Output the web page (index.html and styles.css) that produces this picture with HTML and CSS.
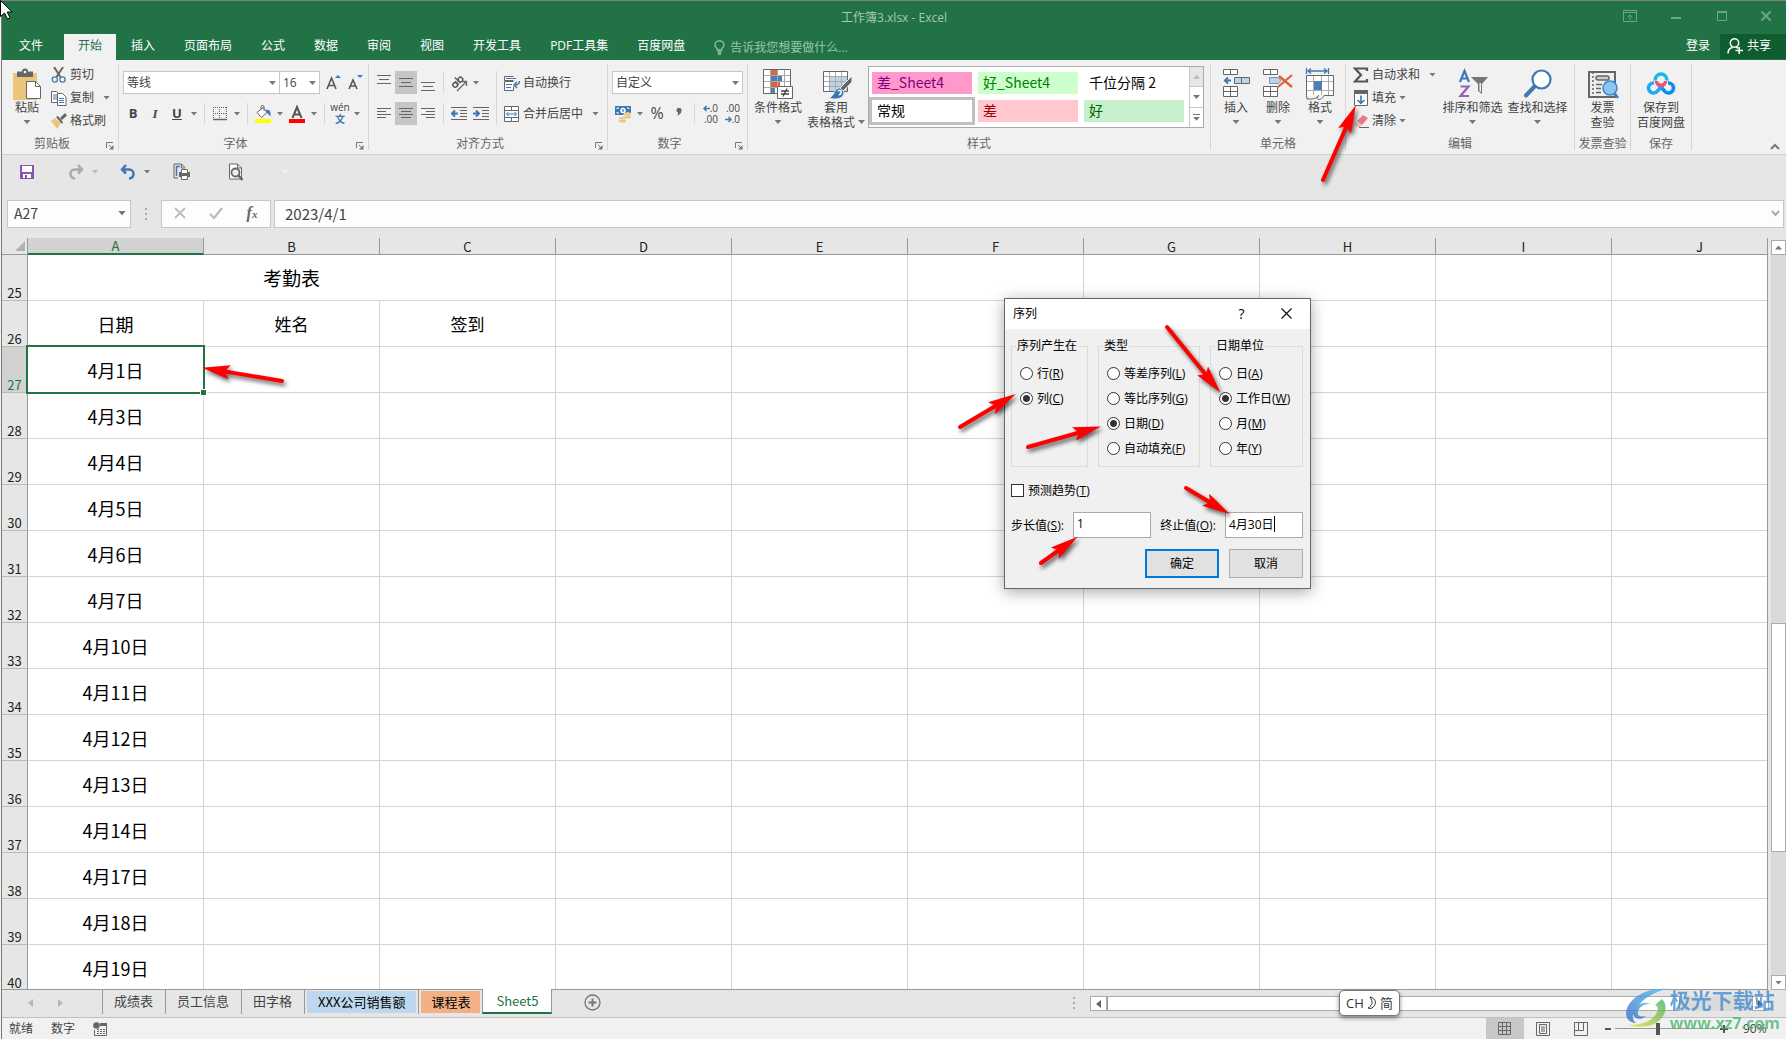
FILE: index.html
```html
<!DOCTYPE html>
<html lang="zh-CN">
<head>
<meta charset="utf-8">
<title>工作簿3.xlsx - Excel</title>
<link rel="stylesheet" href="styles.css">
</head>
<body>
<div class="window">
  <header class="titlebar">
    <div class="titlebar-side"></div>
    <h1 class="doc-title">工作簿3.xlsx - Excel</h1>
    <div class="titlebar-side window-controls">
      <button class="win-btn" aria-label="功能区显示选项"><svg width="14" height="12" viewBox="0 0 14 12" fill="none" stroke="currentColor"><path d="M.5.5h13v11H.5zM.5 2.5h13M7 10V5M4.500 7.500 7 5l2.500 2.500"/></svg></button>
      <button class="win-btn" aria-label="最小化"><svg width="14" height="12" viewBox="0 0 14 12"><path d="M2 7h10v2H2z" fill="currentColor"/></svg></button>
      <button class="win-btn" aria-label="最大化"><svg width="14" height="12" viewBox="0 0 14 12"><path d="M2.500 1v9.500h9V1M2 2h10" fill="none" stroke="currentColor"/><path d="M2 1h10v2H2z" fill="currentColor"/></svg></button>
      <button class="win-btn" aria-label="关闭"><svg width="14" height="12" viewBox="0 0 14 12"><path d="M2.500 1.500l9 9M11.500 1.500l-9 9" stroke="currentColor" stroke-width="2"/></svg></button>
    </div>
  </header>

  <nav class="tabs">
    <button class="tab tab-file">文件</button>
    <button class="tab tab-active">开始</button>
    <button class="tab">插入</button>
    <button class="tab">页面布局</button>
    <button class="tab">公式</button>
    <button class="tab">数据</button>
    <button class="tab">审阅</button>
    <button class="tab">视图</button>
    <button class="tab">开发工具</button>
    <button class="tab">PDF工具集</button>
    <button class="tab">百度网盘</button>
    <button class="tell-me"><svg width="11" height="15" viewBox="0 0 11 15" fill="none" stroke="currentColor" stroke-width="1.300"><path d="M3.500 10C3.500 8 1 7.500 1 4.800a4.500 4 0 0 1 9 0C10 7.500 7.500 8 7.500 10zM3.500 12h4M4 14h3"/></svg>告诉我您想要做什么...</button>
    <button class="sign-in">登录</button>
    <button class="share"><svg width="16" height="16" viewBox="0 0 16 16" fill="none" stroke="currentColor" stroke-width="1.500"><circle cx="7.500" cy="5" r="4.200"/><path d="M1 15.500c0-3.500 2-5.500 4.500-6M9 8.500l2 2M8.500 12.500H16M12.200 9v7"/></svg>共享</button>
  </nav>

  <div class="ribbon">
    <section class="group g-clipboard">
      <div class="group-body">
        <button class="big big-paste">
          <svg width="30" height="30" viewBox="0 0 30 30"><path d="M1 4h24v27H1z" fill="#ecc57c"/><path d="M5 2.500h5a3 3 0 0 1 6 0h5V8H5z" fill="#666"/><circle cx="13" cy="3" r="1.300" fill="#fff"/><path d="M14.500 12.500h9l5 5v12h-14z" fill="#fff" stroke="#666"/><path d="M23.500 12.500v5h5" fill="none" stroke="#666"/></svg>
          <span>粘贴</span><i class="caret"></i>
        </button>
        <div class="stack">
          <button class="small"><svg width="16" height="16" viewBox="0 0 16 16" fill="none"><path d="M3 0l6.500 10M12 0L5.500 10" stroke="#666" stroke-width="2"/><circle cx="3.800" cy="12.500" r="2.600" stroke="#3e78b3" stroke-width="1.300"/><circle cx="11.500" cy="12.500" r="2.600" stroke="#3e78b3" stroke-width="1.300"/></svg>剪切</button>
          <button class="small"><svg width="16" height="16" viewBox="0 0 16 16"><path d="M.5 1.500h5l2 2v9h-7z" fill="#fff" stroke="#666"/><path d="M2 5h4M2 7h4M2 9h4" stroke="#3e78b3"/><path d="M6.500 3.500h5l3.500 3.500v8.500H6.500z" fill="#fff" stroke="#666"/><path d="M8 8.500h5M8 10.500h5M8 12.500h5" stroke="#3e78b3"/></svg>复制<i class="caret caret-far"></i></button>
          <button class="small"><svg width="16" height="16" viewBox="0 0 16 16"><path d="M0 8l4-3 6 5-4 6z" fill="#ecc57c"/><path d="M5 4l2-1 5 6-1 2z" fill="#666"/><path d="M9 5l5-5 2 2.500L11 7z" fill="#666"/></svg>格式刷</button>
        </div>
      </div>
      <h2 class="group-label label-launch">剪贴板</h2>
      <button class="launcher" aria-label="剪贴板选项"><svg width="8" height="8" viewBox="0 0 8 8"><path d="M.5 6V.5H7M3 3l3 3" fill="none" stroke="#777"/><path d="M7.500 3v4.500H3z" fill="#777"/></svg></button>
    </section>

    <section class="group g-font">
      <div class="group-body rows">
        <div class="row">
          <label class="combo combo-font"><select aria-label="字体"><option>等线</option></select><i class="caret"></i></label>
          <label class="combo combo-size"><select aria-label="字号"><option>16</option></select><i class="caret"></i></label>
          <button class="tool tool-grow" aria-label="增大字号"><svg width="16" height="16" viewBox="0 0 16 16"><path d="M1 14L5.500 3 10 14M3 10.500h5.500" fill="none" stroke="#555" stroke-width="1.600"/><path d="M9 3l3-3 3 3z" fill="#3e78b3"/></svg></button>
          <button class="tool" aria-label="减小字号"><svg width="16" height="16" viewBox="0 0 16 16"><path d="M1 14L5 5l4 9M2.500 11h5" fill="none" stroke="#555" stroke-width="1.600"/><path d="M9 0l3 3 3-3z" fill="#3e78b3"/></svg></button>
        </div>
        <div class="row row-font">
          <button class="tool"><b>B</b></button><button class="tool serif"><b><em>I</em></b></button><button class="tool"><b><u>U</u></b></button><button class="drop" aria-label="下划线选项"><i class="caret"></i></button>
          <span class="sep"></span>
          <button class="tool" aria-label="边框"><svg width="14" height="16" viewBox="0 0 14 16" fill="none" stroke="#666"><path d="M0 1.500h14M0 7.500h14M.5 1v12M6.500 1v12M13.500 1v12" stroke-dasharray="1 1"/><path d="M0 13.500h14" stroke-width="1.500"/></svg></button><button class="drop" aria-label="边框选项"><i class="caret"></i></button>
          <span class="sep"></span>
          <button class="tool" aria-label="填充颜色"><svg width="17" height="18" viewBox="0 0 17 18"><path d="M2 7.500l6-5 4 5-5.500 5z" fill="#fff" stroke="#666"/><path d="M6 5V2a1.500 1.500 0 0 1 3 0v4" fill="none" stroke="#666"/><path d="M11 5c4-1 5 2 4.500 6.500C13.500 10 13 8 11 7z" fill="#3e78b3"/><path d="M0 14h16v4H0z" fill="#ff0"/></svg></button><button class="drop" aria-label="填充颜色选项"><i class="caret"></i></button>
          <button class="tool" aria-label="字体颜色"><svg width="16" height="18" viewBox="0 0 16 18"><path d="M3.500 13L8 2l4.500 11M5 9.500h6" fill="none" stroke="#555" stroke-width="2"/><path d="M0 14h16v4H0z" fill="red"/></svg></button><button class="drop" aria-label="字体颜色选项"><i class="caret"></i></button>
          <span class="sep"></span>
          <button class="tool phonetic"><span>wén</span><span class="phonetic-char">文</span></button><button class="drop" aria-label="拼音选项"><i class="caret"></i></button>
        </div>
      </div>
      <h2 class="group-label label-launch">字体</h2>
      <button class="launcher" aria-label="字体设置"><svg width="8" height="8" viewBox="0 0 8 8"><path d="M.5 6V.5H7M3 3l3 3" fill="none" stroke="#777"/><path d="M7.500 3v4.500H3z" fill="#777"/></svg></button>
    </section>

    <section class="group g-align">
      <div class="group-body">
        <div class="rows">
          <div class="row">
            <button class="tool" aria-label="顶端对齐"><svg width="14" height="16" viewBox="0 0 14 16" stroke="#666"><path d="M0 .5h14M2 4.500h10M0 8.500h14"/></svg></button><button class="tool tool-on" aria-label="垂直居中"><svg width="14" height="16" viewBox="0 0 14 16" stroke="#666"><path d="M0 3.500h14M2 7.500h10M0 11.500h14"/></svg></button><button class="tool" aria-label="底端对齐"><svg width="14" height="16" viewBox="0 0 14 16" stroke="#666"><path d="M0 7.500h14M2 11.500h10M0 15.500h14"/></svg></button>
            <span class="sep"></span>
            <button class="tool" aria-label="方向"><svg width="18" height="18" viewBox="0 0 18 18"><g fill="none" stroke="#555" stroke-width="1.400" transform="rotate(-45 8 8)"><circle cx="4" cy="8" r="2.300"/><path d="M6.500 5.500v5M9 2.500v8"/><circle cx="11.500" cy="8" r="2.300"/></g><path d="M7 17l9-9M12 7.500h4.500V12" fill="none" stroke="#666" stroke-width="1.300"/></svg></button><button class="drop" aria-label="方向选项"><i class="caret"></i></button>
          </div>
          <div class="row">
            <button class="tool" aria-label="左对齐"><svg width="14" height="12" viewBox="0 0 14 12" stroke="#666"><path d="M0 .5h14M0 3.500h9M0 6.500h14M0 9.500h9"/></svg></button><button class="tool tool-on" aria-label="居中"><svg width="14" height="12" viewBox="0 0 14 12" stroke="#666"><path d="M0 .5h14M2 3.500h10M0 6.500h14M2 9.500h10"/></svg></button><button class="tool" aria-label="右对齐"><svg width="14" height="12" viewBox="0 0 14 12" stroke="#666"><path d="M0 .5h14M5 3.500h9M0 6.500h14M5 9.500h9"/></svg></button>
            <span class="sep"></span>
            <button class="tool" aria-label="减少缩进量"><svg width="16" height="14" viewBox="0 0 16 14"><path d="M0 .5h16M9 3.500h7M9 6.500h7M0 12.500h16M9 9.500h7" stroke="#666"/><path d="M7 6.500H1M4 3.500l-3 3 3 3" fill="none" stroke="#3e78b3" stroke-width="2"/></svg></button><button class="tool" aria-label="增加缩进量"><svg width="16" height="14" viewBox="0 0 16 14"><path d="M0 .5h16M9 3.500h7M9 6.500h7M0 12.500h16M9 9.500h7" stroke="#666"/><path d="M0 6.500h6M3 3.500l3 3-3 3" fill="none" stroke="#3e78b3" stroke-width="2"/></svg></button>
          </div>
        </div>
        <span class="sep sep-tall"></span>
        <div class="rows">
          <button class="small"><svg width="16" height="16" viewBox="0 0 16 16"><path d="M9.500 1.500h-9v4h9M9.500 6.500h-9v9h9v-4" fill="#fff" stroke="#666"/><path d="M2 3.500h10M2 9.500h6M2 12.500h5" stroke="#3e78b3"/><path d="M15.500 6c0 3-1 4-5 4M13 7l-3 3 3 3" fill="none" stroke="#3e78b3" stroke-width="1.500"/></svg>自动换行</button>
          <button class="small"><svg width="16" height="16" viewBox="0 0 16 16"><path d="M.5.5h14v15H.5zM.5 4.500h14M.5 11.500h14M7.500.5v4M7.500 11.500v4" fill="#fff" stroke="#666"/><path d="M2.500 8h10M4.500 6l-2 2 2 2M10.500 6l2 2-2 2" fill="none" stroke="#3e78b3"/></svg>合并后居中<i class="caret caret-far"></i></button>
        </div>
      </div>
      <h2 class="group-label label-launch">对齐方式</h2>
      <button class="launcher" aria-label="对齐设置"><svg width="8" height="8" viewBox="0 0 8 8"><path d="M.5 6V.5H7M3 3l3 3" fill="none" stroke="#777"/><path d="M7.500 3v4.500H3z" fill="#777"/></svg></button>
    </section>

    <section class="group g-number">
      <div class="group-body rows">
        <div class="row"><label class="combo combo-number"><select aria-label="数字格式"><option>自定义</option></select><i class="caret"></i></label></div>
        <div class="row">
          <button class="tool" aria-label="会计数字格式"><svg width="17" height="18" viewBox="0 0 17 18"><path d="M0 1h16v9H0z" fill="#3e78b3"/><path d="M2 4V3h2M12 3h2v1M2 7v1h2" stroke="#fff" fill="none"/><circle cx="8" cy="5.500" r="2.700" fill="#fff"/><path d="M8 4.300v2.400" stroke="#3e78b3" stroke-width="1.500"/><g fill="#ecc57c" stroke="#f1f1f1" stroke-width=".6"><ellipse cx="12.500" cy="9.500" rx="3.800" ry="1.900"/><ellipse cx="12.500" cy="12" rx="3.800" ry="1.900"/><ellipse cx="7.500" cy="13.500" rx="3.800" ry="1.900"/><ellipse cx="7.500" cy="16" rx="3.800" ry="1.900"/></g></svg></button><button class="drop" aria-label="货币选项"><i class="caret"></i></button><button class="tool percent">%</button><button class="tool" aria-label="千位分隔样式"><svg width="6" height="11" viewBox="0 0 6 11"><path d="M1 8c3-1.500 4.500-3 4.500-5.500a2.500 2.500 0 1 0-3.500 2c0 1 0 2-1 3.500z" fill="#666"/></svg></button>
          <span class="sep"></span>
          <button class="tool decimals"><span><svg width="7" height="7" viewBox="0 0 7 7"><path d="M7 3.500H1M3.500 1L1 3.500 3.500 6" fill="none" stroke="#3e78b3" stroke-width="1.500"/></svg>.0</span><span>.00</span></button><button class="tool decimals"><span>.00</span><span><svg width="7" height="7" viewBox="0 0 7 7"><path d="M0 3.500h6M3.500 1L6 3.500 3.500 6" fill="none" stroke="#3e78b3" stroke-width="1.500"/></svg>.0</span></button>
        </div>
      </div>
      <h2 class="group-label label-launch">数字</h2>
      <button class="launcher" aria-label="数字设置"><svg width="8" height="8" viewBox="0 0 8 8"><path d="M.5 6V.5H7M3 3l3 3" fill="none" stroke="#777"/><path d="M7.500 3v4.500H3z" fill="#777"/></svg></button>
    </section>

    <section class="group g-styles">
      <div class="group-body">
        <button class="big big-cond">
          <svg width="30" height="30" viewBox="0 0 30 30"><path d="M.5.5h27v24H.5z" fill="#fff"/><path d="M8 1h6v5H8zM8 13h9v5H8z" fill="#dd6340"/><path d="M8 7h11v5H8zM8 19h4v5H8z" fill="#4a80b8"/><path d="M7.500 0v24M14.500 0v24M21.500 0v24M0 6.500h28M0 12.500h28M0 18.500h28" stroke="#aaa"/><path d="M.5.500h27v24H.5z" fill="none" stroke="#666"/><path d="M14.500 17.500h15v12h-15z" fill="#fff" stroke="#666"/><path d="M18 22h8M18 25h8M24 19.500l-4 8" stroke="#444" stroke-width="1.300"/></svg>
          <span>条件格式</span><i class="caret"></i>
        </button>
        <button class="big big-table">
          <svg width="30" height="30" viewBox="-2 0 30 30"><path d="M.5 2.500h24v20H.5z" fill="#fff"/><path d="M7 8h18v15H7z" fill="#bdd3ea"/><path d="M6.500 2v20M12.500 2v20M18.500 2v20M0 7.500h24M0 12.500h24M0 17.500h24" stroke="#aaa"/><path d="M.5 2.500h24v20H.5z" fill="none" stroke="#666"/><path d="M29 7v6l-9 9-3-3z" fill="#666" stroke="#f1f1f1"/><path d="M17 19c-6 0-5 8-11 10 7 2 15 1 15-6z" fill="#3e78b3" stroke="#f1f1f1" stroke-width=".7"/><path d="M15 22c3-2 5 2 1 4" fill="none" stroke="#fff" stroke-width="1.500"/></svg>
          <span>套用</span><span class="with-caret">表格格式<i class="caret"></i></span>
        </button>
        <div class="gallery">
          <div class="gallery-items">
            <button class="style style-bad4">差_Sheet4</button>
            <button class="style style-good4">好_Sheet4</button>
            <button class="style">千位分隔 2</button>
            <button class="style style-selected">常规</button>
            <button class="style style-bad">差</button>
            <button class="style style-good">好</button>
          </div>
          <div class="gallery-scroll">
            <button class="gal-btn gal-off" aria-label="上一行"><i class="caret caret-up"></i></button>
            <button class="gal-btn" aria-label="下一行"><i class="caret"></i></button>
            <button class="gal-btn gal-more" aria-label="其他"><i class="caret"></i></button>
          </div>
        </div>
      </div>
      <h2 class="group-label">样式</h2>
    </section>

    <section class="group g-cells">
      <div class="group-body">
        <button class="big big-cell">
          <svg width="28" height="30" viewBox="0 0 28 30"><path d="M1.500.5h14v5h-14zM8.500.5v5M1.500 17.500h14v10h-14zM8.500 17.500v10M1.500 22.500h14" fill="#fff" stroke="#666"/><path d="M12.500 8.500h15v6h-15zM19.500 8.500v6" fill="#bdd3ea" stroke="#666"/><path d="M9 11.500H3M6 8.500l-3 3 3 3" fill="none" stroke="#3e78b3" stroke-width="2"/></svg>
          <span>插入</span><i class="caret"></i>
        </button>
        <button class="big big-cell">
          <svg width="30" height="30" viewBox="0 0 30 30"><path d="M.5.5h14v5h-14zM7.500.5v5M.5 17.500h14v10H.5zM7.500 17.500v10M.5 22.500h14" fill="#fff" stroke="#666"/><path d="M6.500 8.500h9l2.500 3-2.500 3h-9z" fill="#bdd3ea" stroke="#7a95b0"/><path d="M16 7l13 11M29 6L15 18" stroke="#dd6340" stroke-width="2.300"/></svg>
          <span>删除</span><i class="caret"></i>
        </button>
        <button class="big big-cell">
          <svg width="28" height="30" viewBox="0 1 28 30"><path d="M.5 0v6M22.500 0v6M2 3h19M5 .5L2 3l3 2.500M18 .5L21 3l-3 2.500" fill="none" stroke="#3e78b3" stroke-width="1.300"/><path d="M.5 7.500h27v20H.5z" fill="#fff"/><path d="M.5 13.500h27M.5 22.500h27M7.500 7v20M15.500 7v20M22.500 7v20" stroke="#aaa"/><path d="M.500 27.500v-20h27v20H18c-2 4-5 4-5 4-3 0-2-4 0-4-2 2-4 4-12 3.500z" fill="none" stroke="#666"/><path d="M8 13h8v9H8z" fill="#4a80b8"/></svg>
          <span>格式</span><i class="caret"></i>
        </button>
      </div>
      <h2 class="group-label">单元格</h2>
    </section>

    <section class="group g-edit">
      <div class="group-body">
        <div class="stack stack-edit">
          <button class="small"><svg width="16" height="16" viewBox="0 0 16 16"><path d="M14 4V1.500H2L8 8l-6 6.500h12V12" fill="none" stroke="#555" stroke-width="2.200"/></svg>自动求和<i class="caret caret-far"></i></button>
          <button class="small"><svg width="16" height="16" viewBox="0 0 16 16"><path d="M1.500.5h13v15h-13z" fill="#fff" stroke="#666"/><path d="M1 0h14v4H1z" fill="#666"/><path d="M8 5.500V13M4.500 10L8 13.300 11.500 10" fill="none" stroke="#3e78b3" stroke-width="1.700"/></svg>填充<i class="caret"></i></button>
          <button class="small"><svg width="16" height="16" viewBox="0 0 16 16"><path d="M4 8l6-6 5 3-6 7z" fill="#e8788c"/><path d="M4 8l5 4-2 2H4L1 11z" fill="#f4b8c2"/><path d="M6 14.500h10" stroke="#666"/></svg>清除<i class="caret"></i></button>
        </div>
        <button class="big big-wide">
          <svg width="32" height="30" viewBox="0 0 32 30"><path d="M3 13L7.500 2 12 13M4.500 9.500h6" fill="none" stroke="#3e78b3" stroke-width="2.200"/><path d="M3.500 17.500h8l-8 9.500H12" fill="none" stroke="#9461b4" stroke-width="2.200"/><path d="M14 8h17l-6 7v10l-4-3v-7z" fill="#777"/><path d="M22.500 14v8l1.500 1v-9" fill="#f1f1f1"/></svg>
          <span>排序和筛选</span><i class="caret"></i>
        </button>
        <button class="big big-wide">
          <svg width="30" height="30" viewBox="0 0 30 30"><path d="M12 17L3 26.500" stroke="#3e78b3" stroke-width="4" stroke-linecap="round"/><circle cx="18.500" cy="10.500" r="9" fill="#fff" stroke="#3e78b3" stroke-width="2.200"/></svg>
          <span>查找和选择</span><i class="caret"></i>
        </button>
      </div>
      <h2 class="group-label">编辑</h2>
    </section>

    <section class="group g-invoice">
      <div class="group-body">
        <button class="big big-fill">
          <svg width="32" height="30" viewBox="0 0 32 30"><path d="M2 3h26v25H2z" fill="#eee" stroke="#666" stroke-width="2"/><path d="M6 3v25" stroke="#666" stroke-width="1.500" stroke-dasharray="2 2"/><rect x="9" y="7" width="13" height="4" rx="2" fill="#ccc" stroke="#666" stroke-width="1.500"/><path d="M9 15.500h6M9 19.500h5M9 23.500h5" stroke="#666" stroke-width="1.500"/><circle cx="23" cy="19" r="7" fill="#8cc4f4" stroke="#3b86c8" stroke-width="1.500"/><path d="M27.500 24l3.500 5" stroke="#3b86c8" stroke-width="2.500"/></svg>
          <span>发票</span><span>查验</span>
        </button>
      </div>
      <h2 class="group-label">发票查验</h2>
    </section>

    <section class="group g-save">
      <div class="group-body">
        <button class="big big-fill">
          <svg width="28" height="30" viewBox="0 0 28 30" fill="none"><path d="M8 11.500a6 6.500 0 0 1 12 0" stroke="#16b8ee" stroke-width="3.500"/><path d="M11 15l6.500 7a5 5 0 1 0 3.500-8" stroke="#0b8cf0" stroke-width="3.500"/><path d="M17 15l-6.500 7a5 5 0 1 1-3.500-8" stroke="#1fa8f4" stroke-width="3.500"/><path d="M9.500 12a4.500 4.500 0 0 0 9 0" stroke="#f0506a" stroke-width="3.500"/></svg>
          <span>保存到</span><span>百度网盘</span>
        </button>
      </div>
      <h2 class="group-label">保存</h2>
    </section>

    <button class="collapse" aria-label="折叠功能区"><svg width="10" height="7" viewBox="0 0 10 7"><path d="M1 6l4-4 4 4" fill="none" stroke="#777" stroke-width="2"/></svg></button>
  </div>

  <div class="quick-access">
    <button class="qa" aria-label="保存"><svg width="16" height="16" viewBox="0 0 16 16"><path d="M1 1h14v14H1z" fill="#8a55ad"/><path d="M3 2h10v6H3zM4 10h8v4H4z" fill="#fff"/><path d="M6 11h2v3H6z" fill="#8a55ad"/></svg></button>
    <button class="qa qa-redo" aria-label="恢复"><svg width="16" height="16" viewBox="0 0 16 16" fill="none" stroke="#aaa" stroke-width="2.500"><path d="M10 1l4 4.500-4 4M14 5.500H7c-6 0-6 8 0 9"/></svg></button>
    <button class="drop drop-faint" aria-label="恢复选项"><i class="caret"></i></button>
    <button class="qa qa-undo" aria-label="撤消"><svg width="16" height="16" viewBox="0 0 16 16" fill="none" stroke="#3e78b3" stroke-width="2.500"><path d="M6 1L2 5.500l4 4M2 5.500h7c6 0 6 8 0 9"/></svg></button>
    <button class="drop" aria-label="撤消选项"><i class="caret"></i></button>
    <button class="qa qa-print" aria-label="打印预览和打印"><svg width="18" height="17" viewBox="0 0 18 17"><path d="M12 4.500L8.500 1H1v14h4" fill="none" stroke="#666"/><path d="M8.500 1v4H12" fill="none" stroke="#666"/><path d="M3.500 13V3.500H7" fill="none" stroke="#3e78b3" stroke-width="1.500"/><path d="M6 9h11v5H6z" fill="#666"/><path d="M8.500 6.500h6v4h-6zM8.500 12.500h6v4h-6z" fill="#fff" stroke="#666"/></svg></button>
    <button class="qa qa-preview" aria-label="打印预览"><svg width="16" height="18" viewBox="0 0 16 18"><path d="M1.500 1h8l4 4v11h-12z" fill="#fff" stroke="#666"/><path d="M9.500 1v4h4" fill="none" stroke="#666"/><circle cx="7.500" cy="9.500" r="4" fill="#eee" stroke="#666" stroke-width="1.800"/><path d="M10 12l4.500 5" stroke="#666" stroke-width="2.500"/></svg></button>
    <button class="qa qa-more" aria-label="自定义快速访问工具栏"><i class="caret"></i></button>
  </div>

  <div class="formula-bar">
    <div class="name-box"><input type="text" value="A27" aria-label="名称框"><i class="caret caret-wide"></i></div>
    <span class="dots"><i></i><i></i><i></i></span>
    <div class="fx-box">
      <button class="fx-btn" aria-label="取消"><svg width="12" height="12" viewBox="0 0 12 12"><path d="M1 1l10 10M11 1L1 11" stroke="#bbb" stroke-width="1.800"/></svg></button>
      <button class="fx-btn" aria-label="输入"><svg width="14" height="12" viewBox="0 0 14 12"><path d="M1 7l4 4 8-10" fill="none" stroke="#bbb" stroke-width="2.300"/></svg></button>
      <button class="fx-btn fx"><em>f<sub>x</sub></em></button>
    </div>
    <div class="formula"><input type="text" value="2023/4/1" aria-label="编辑栏"><svg width="9" height="7" viewBox="0 0 9 7"><path d="M1 1l3.500 4L8 1" fill="none" stroke="#aaa" stroke-width="2"/></svg></div>
  </div>

  <main class="sheet-area">
    <div class="sheet-view">
      <table class="sheet">
        <colgroup><col class="c-head"><col class="c"><col class="c"><col class="c"><col class="c"><col class="c"><col class="c"><col class="c"><col class="c"><col class="c"><col class="c"></colgroup>
        <thead><tr><th class="corner"><svg width="10" height="10" viewBox="0 0 10 10"><path d="M10 0v10H0z" fill="#b2b2b2"/></svg></th><th class="col-on">A</th><th>B</th><th>C</th><th>D</th><th>E</th><th>F</th><th>G</th><th>H</th><th>I</th><th>J</th></tr></thead>
        <tbody>
        <tr><th>25</th><td colspan="3" class="sheet-title">考勤表</td><td></td><td></td><td></td><td></td><td></td><td></td><td></td></tr>
        <tr><th>26</th><td>日期</td><td class="sub">姓名</td><td class="sub">签到</td><td></td><td></td><td></td><td></td><td></td><td></td><td></td></tr>
        <tr><th class="row-on">27</th><td class="active-cell">4月1日</td><td></td><td></td><td></td><td></td><td></td><td></td><td></td><td></td><td></td></tr>
        <tr><th>28</th><td>4月3日</td><td></td><td></td><td></td><td></td><td></td><td></td><td></td><td></td><td></td></tr>
        <tr><th>29</th><td>4月4日</td><td></td><td></td><td></td><td></td><td></td><td></td><td></td><td></td><td></td></tr>
        <tr><th>30</th><td>4月5日</td><td></td><td></td><td></td><td></td><td></td><td></td><td></td><td></td><td></td></tr>
        <tr><th>31</th><td>4月6日</td><td></td><td></td><td></td><td></td><td></td><td></td><td></td><td></td><td></td></tr>
        <tr><th>32</th><td>4月7日</td><td></td><td></td><td></td><td></td><td></td><td></td><td></td><td></td><td></td></tr>
        <tr><th>33</th><td>4月10日</td><td></td><td></td><td></td><td></td><td></td><td></td><td></td><td></td><td></td></tr>
        <tr><th>34</th><td>4月11日</td><td></td><td></td><td></td><td></td><td></td><td></td><td></td><td></td><td></td></tr>
        <tr><th>35</th><td>4月12日</td><td></td><td></td><td></td><td></td><td></td><td></td><td></td><td></td><td></td></tr>
        <tr><th>36</th><td>4月13日</td><td></td><td></td><td></td><td></td><td></td><td></td><td></td><td></td><td></td></tr>
        <tr><th>37</th><td>4月14日</td><td></td><td></td><td></td><td></td><td></td><td></td><td></td><td></td><td></td></tr>
        <tr><th>38</th><td>4月17日</td><td></td><td></td><td></td><td></td><td></td><td></td><td></td><td></td><td></td></tr>
        <tr><th>39</th><td>4月18日</td><td></td><td></td><td></td><td></td><td></td><td></td><td></td><td></td><td></td></tr>
        <tr><th>40</th><td>4月19日</td><td></td><td></td><td></td><td></td><td></td><td></td><td></td><td></td><td></td></tr>
        </tbody>
      </table>
    </div>
    <div class="vscroll">
      <button class="scroll-btn" aria-label="向上滚动"><i class="caret caret-up"></i></button>
      <div class="vtrack"><div class="vspace"></div><div class="vthumb"></div></div>
      <button class="scroll-btn" aria-label="向下滚动"><i class="caret"></i></button>
    </div>
  </main>

  <div class="sheet-tabs">
    <button class="nav-arrow" aria-label="上一工作表"><svg width="6" height="8" viewBox="0 0 6 8"><path d="M5 0v8L0 4z" fill="#b5b5b5"/></svg></button>
    <button class="nav-arrow" aria-label="下一工作表"><svg width="6" height="8" viewBox="0 0 6 8"><path d="M1 0v8l5-4z" fill="#b5b5b5"/></svg></button>
    <div class="tab-list">
      <button class="stab">成绩表</button><button class="stab">员工信息</button><button class="stab">田字格</button><button class="stab stab-blue"><span>XXX公司销售额</span></button><button class="stab stab-orange"><span>课程表</span></button><button class="stab stab-on">Sheet5</button>
    </div>
    <button class="add-sheet" aria-label="新工作表"><svg width="17" height="17" viewBox="0 0 17 17" fill="none" stroke="#777"><circle cx="8.500" cy="8.500" r="7.500" stroke-width="1.300"/><path d="M8.500 4.500v8M4.500 8.500h8" stroke-width="2"/></svg></button>
    <span class="dots dots-tabs"><i></i><i></i><i></i></span>
    <div class="hscroll">
      <button class="hbtn" aria-label="向左滚动"><svg width="5" height="8" viewBox="0 0 5 8"><path d="M5 0v8L0 4z" fill="#666"/></svg></button>
      <div class="hthumb"></div>
      <div class="hspace"></div>
      <button class="hbtn" aria-label="向右滚动"><svg width="5" height="8" viewBox="0 0 5 8"><path d="M0 0v8l5-4z" fill="#555"/></svg></button>
    </div>
  </div>

  <footer class="status">
    <span>就绪</span><span>数字</span>
    <svg class="macro" width="14" height="14" viewBox="0 0 14 14"><circle cx="3.500" cy="3.500" r="3.300" fill="#666"/><path d="M7 1.500h6.500v12h-12V8" fill="none" stroke="#666"/><path d="M7 1h7v3H7z" fill="#666"/><path d="M4 7.500h2M7 7.500h2M10 7.500h2M4 9.500h2M7 9.500h2M10 9.500h2M4 11.500h2M7 11.500h2M10 11.500h2" stroke="#666"/></svg>
    <div class="status-right">
      <button class="view view-on" aria-label="普通"><svg width="14" height="14" viewBox="0 0 14 14" fill="none" stroke="#666"><path d="M.5.5h12v12H.5zM.5 4.500h12M.5 8.500h12M4.500.5v12M8.500.5v12"/></svg></button>
      <button class="view" aria-label="页面布局"><svg width="14" height="14" viewBox="0 0 14 14" fill="none" stroke="#666"><path d="M.5.5h13v13H.5zM3.500 2.500h7v9h-7zM5 5h4M5 7h4M5 9h4"/></svg></button>
      <button class="view" aria-label="分页预览"><svg width="14" height="14" viewBox="0 0 14 14" fill="none" stroke="#666"><path d="M.5.5h13v13H.5zM4.500.5v8h5v-8M4.500 8.500H.5"/></svg></button>
      <button class="zoom-btn" aria-label="缩小"><svg width="10" height="10" viewBox="0 0 10 10"><path d="M2 4h6v2H2z" fill="#555"/></svg></button>
      <input class="zoom" type="range" min="10" max="200" value="90" aria-label="缩放">
      <button class="zoom-btn" aria-label="放大"><svg width="10" height="10" viewBox="0 0 10 10"><path d="M1 4h8v2H1zM4 1h2v8H4z" fill="#555"/></svg></button>
      <span class="zoom-value">90%</span>
    </div>
  </footer>
</div>

<form class="dialog">
  <div class="dialog-title"><h2>序列</h2>
    <button type="button" class="dlg-icon dlg-help">?</button>
    <button type="button" class="dlg-icon" aria-label="关闭"><svg width="11" height="11" viewBox="0 0 11 11"><path d="M.5.5l10 10M10.500.5l-10 10" stroke="#111" stroke-width="1.200"/></svg></button>
  </div>
  <div class="dialog-body">
    <div class="fieldsets">
      <fieldset class="fs fs-a"><legend>序列产生在</legend>
        <label><input type="radio" name="dir"><span>行(<u>R</u>)</span></label>
        <label><input type="radio" name="dir" checked><span>列(<u>C</u>)</span></label>
      </fieldset>
      <fieldset class="fs fs-b"><legend>类型</legend>
        <label><input type="radio" name="type"><span>等差序列(<u>L</u>)</span></label>
        <label><input type="radio" name="type"><span>等比序列(<u>G</u>)</span></label>
        <label><input type="radio" name="type" checked><span>日期(<u>D</u>)</span></label>
        <label><input type="radio" name="type"><span>自动填充(<u>F</u>)</span></label>
      </fieldset>
      <fieldset class="fs fs-c"><legend>日期单位</legend>
        <label><input type="radio" name="unit"><span>日(<u>A</u>)</span></label>
        <label><input type="radio" name="unit" checked><span>工作日(<u>W</u>)</span></label>
        <label><input type="radio" name="unit"><span>月(<u>M</u>)</span></label>
        <label><input type="radio" name="unit"><span>年(<u>Y</u>)</span></label>
      </fieldset>
    </div>
    <label class="trend"><input type="checkbox"><span>预测趋势(<u>T</u>)</span></label>
    <div class="values">
      <label for="step">步长值(<u>S</u>):</label><input id="step" type="text" value="1">
      <label for="stop">终止值(<u>O</u>):</label><span class="stop-field"><input id="stop" type="text" value="4月30日"><i class="text-caret"></i></span>
    </div>
    <div class="dialog-actions"><button type="button" class="dlg-btn dlg-ok">确定</button><button type="button" class="dlg-btn">取消</button></div>
  </div>
</form>

<div class="ime">CH<svg width="10" height="14" viewBox="0 0 10 14"><path d="M3 1c6 1 8 8 1 11.500L1 12c5-3 5-6 2-11z" fill="none" stroke="#333"/></svg>简</div>

<div class="watermark">
  <svg width="44" height="40" viewBox="0 0 44 40"><defs><linearGradient id="wa" x1="0" y1="1" x2="1" y2="0"><stop offset="0" stop-color="#3f6fc4"/><stop offset="1" stop-color="#4cc0ee"/></linearGradient><linearGradient id="wb" x1="0" y1="1" x2="1" y2="0"><stop offset="0" stop-color="#e6e23c"/><stop offset="1" stop-color="#3fb26a"/></linearGradient></defs><path d="M42 1C20-1 2 12 1 25c0 7 5 10 10 10-5-5-4-10 1-16C18 11 28 4 42 1z" fill="url(#wa)"/><path d="M26 16c-8-4-18 2-18 9 0 6 8 8 13 3-5 1-9 0-8-4 1-5 7-9 13-8z" fill="url(#wa)"/><path d="M37 11c8 8 2 24-14 27-7 1-14 1-20-1 14 0 24-4 28-11 3-5 2-8-1-9z" fill="url(#wb)"/></svg>
  <div class="watermark-text"><span class="wm-name">极光下载站</span><span class="wm-url">www.xz7.com</span></div>
</div>

<svg class="annotations" width="1400" height="600" viewBox="0 0 1400 600" aria-hidden="true">
  <defs><marker id="head" markerUnits="userSpaceOnUse" markerWidth="30" markerHeight="16" refX="26" refY="8" orient="auto"><path d="M28 8L0 1l5 7-5 7z" fill="red"/></marker></defs>
  <g stroke="red" stroke-width="4" stroke-linecap="round" fill="none">
    <path d="M1323 180L1355 107" marker-end="url(#head)" pathLength="100" stroke-dasharray="80 100"/>
    <path d="M282 381L204 368" marker-end="url(#head)" pathLength="100" stroke-dasharray="80 100"/>
    <path d="M960 427L1014 395" marker-end="url(#head)" pathLength="100" stroke-dasharray="75 100"/>
    <path d="M1028 447L1099 427" marker-end="url(#head)" pathLength="100" stroke-dasharray="75 100"/>
    <path d="M1167 327L1219 391" marker-end="url(#head)" pathLength="100" stroke-dasharray="75 100"/>
    <path d="M1186 488L1228 513" marker-end="url(#head)" pathLength="100" stroke-dasharray="65 100"/>
    <path d="M1041 563L1076 538" marker-end="url(#head)" pathLength="100" stroke-dasharray="60 100"/>
  </g>
</svg>
<svg class="pointer" width="13" height="20" viewBox="0 0 13 20" aria-hidden="true"><path d="M.5.5v16l4-3.500 3 6 2.500-1.200-2.800-5.800h5z" fill="#fff" stroke="#000"/></svg>
</body>
</html>
```
FILE: styles.css
```css
*, *::before, *::after { box-sizing: border-box; }
html { height: 100%; background: #f4f4f4; }
body {
  margin: 0;
  height: 100%;
  overflow: hidden;
  position: relative;
  font-family: "Open Sans", "Noto Sans CJK SC", sans-serif;
  font-size: 12px;
  line-height: 15px;
  color: #444;
}
button, input, select { font: inherit; color: inherit; margin: 0; padding: 0; border: 0; background: none; border-radius: 0; }
button { display: flex; align-items: center; justify-content: center; white-space: nowrap; }
h1, h2 { margin: 0; font-size: 12px; font-weight: 400; }
svg { display: block; flex: none; }
input { outline: 0; min-width: 0; }

.window { height: 100%; margin-left: 1px; border-left: 1px solid #777; border-top: 1px solid #808080; display: flex; flex-direction: column; background: #e6e6e6; }

/* Title bar */
.titlebar { height: 33px; background: #217346; color: #a6c7b5; display: flex; align-items: center; flex: none; }
.titlebar-side { flex: 1; }
.doc-title { line-height: 33px; }
.window-controls { display: flex; justify-content: flex-end; color: #6da485; padding-bottom: 3px; }
.win-btn { width: 46px; height: 28px; }
.win-btn:last-child { width: 41px; }

/* Ribbon tabs */
.tabs { height: 26px; background: #217346; color: #fff; display: flex; gap: 1px; flex: none; }
.tab { padding: 0 14px 3px; }
.tab-file { width: 61px; padding: 0 3px 3px 0; }
.tab-active { background: #f1f1f1; color: #217346; }
.tell-me { color: #9dc3ae; gap: 5px; margin-left: 14px; }
.sign-in { margin-left: auto; margin-right: 9px; padding-bottom: 3px; }
.share { width: 66px; height: 25px; background: #0e5c2f; gap: 4px; padding-bottom: 2px; padding-right: 8px; }

/* Ribbon */
.ribbon { background: #f1f1f1; border-bottom: 1px solid #d2d2d2; padding: 4px 0; display: flex; flex: none; height: 95px; }
.group { position: relative; flex: none; height: 86px; padding-left: 4px; border-right: 1px solid #d6d6d6; }
.group-body { height: 73px; display: flex; }
.group-label { line-height: 13px; text-align: center; color: #666; padding-right: 4px; }
.label-launch { padding-right: 20px; }
.g-clipboard { width: 117px; }
.g-font { width: 250px; }
.g-align { width: 239px; }
.g-number { width: 140px; }
.g-styles { width: 463px; }
.g-cells { width: 135px; }
.g-edit { width: 229px; }
.g-invoice { width: 56px; padding: 0; }
.g-save { width: 61px; padding: 0; }
.g-invoice .group-label, .g-save .group-label { padding: 0; }
.launcher { position: absolute; right: 4px; bottom: 0; }
.collapse { margin: auto 6px 0 auto; }

.caret { display: block; width: 7px; height: 4px; background: #777; clip-path: polygon(0 0, 100% 0, 50% 100%); flex: none; }
.caret-up { clip-path: polygon(50% 0, 100% 100%, 0 100%); }
.caret-wide { width: 8px; height: 5px; }

.big { flex-direction: column; justify-content: flex-start; padding-top: 5px; }
.big svg { height: 30px; margin-bottom: 1px; overflow: visible; }
.big .caret { margin-top: 5px; }
.with-caret { display: flex; gap: 3px; }
.big-paste { width: 42px; }
.big-cond { width: 52px; }
.big-table { width: 64px; }
.big-cell { width: 42px; }
.big-wide { width: 65px; }
.big-fill { width: 100%; }

.stack { display: flex; flex-direction: column; height: 71px; justify-content: flex-start; margin-top: -1px; }
.stack-edit { width: 90px; }
.small { height: 23px; padding-left: 3px; gap: 3px; justify-content: flex-start; }
.small .caret-far { margin-left: 6px; }

.rows { display: flex; flex-direction: column; gap: 8px; padding-top: 7px; }
.row { display: flex; height: 23px; }
.row-font { margin-left: -1px; }
.tool { width: 22px; height: 23px; }
.tool b { font-size: 13px; }
.serif { font-family: "Liberation Serif", serif; }
.tool-on { background: #c6c6c6; }
.tool-grow { margin-left: 3px; }
.drop { width: 12px; height: 23px; }
.sep { width: 1px; margin: 1px 4px; background: #d6d6d6; flex: none; }
.sep-tall { margin: 7px 4px 12px; }
.phonetic { flex-direction: column; font-size: 10px; line-height: 11px; }
.phonetic-char { color: #3e78b3; font-weight: 700; line-height: 12px; }
.percent { font-size: 16px; }
.decimals { flex-direction: column; align-items: flex-end; padding-right: 3px; font-size: 10px; line-height: 11px; }
.decimals span { display: flex; align-items: center; }

.combo { position: relative; height: 23px; background: #fff; border: 1px solid #c6c6c6; }
.combo select { width: 100%; height: 100%; padding-left: 3px; appearance: none; outline: 0; }
.combo .caret { position: absolute; right: 3px; top: 9px; }
.combo-font { width: 157px; }
.combo-size { width: 41px; margin-left: -1px; }
.combo-number { width: 131px; }

.gallery { margin-top: 2px; width: 336px; height: 62px; border: 1px solid #ababab; background: #fff; display: flex; justify-content: space-between; }
.gallery-items { display: grid; grid-template-columns: repeat(3, 100px); grid-auto-rows: 22px; gap: 6px; padding: 5px 3px; }
.style { justify-content: flex-start; padding: 0 0 2px 5px; font-family: "Noto Sans CJK SC", sans-serif; font-size: 14px; color: #000; }
.style-bad4 { background: #ff99cc; color: #800080; }
.style-good4 { background: #ccffcc; color: #008000; }
.style-bad { background: #ffc7ce; color: #9c0006; }
.style-good { background: #c6efce; color: #006100; }
.style-selected { outline: 3px solid #c0c0c0; }
.gallery-scroll { width: 14px; border-left: 1px solid #c6c6c6; display: flex; flex-direction: column; }
.gal-btn { flex: 1; width: 100%; border-bottom: 1px solid #c6c6c6; }
.gal-btn:last-child { border: 0; }
.gal-off { background: #e6e6e6; }
.gal-off .caret { background: #bbb; }
.gal-more { flex-direction: column; gap: 2px; }
.gal-more::before { content: ""; width: 7px; height: 1px; background: #777; }

/* Quick access toolbar */
.quick-access { display: flex; align-items: center; height: 35px; padding: 0 0 2px 16px; flex: none; }
.qa { width: 18px; height: 23px; }
.qa-redo { margin-left: 31px; }
.qa-undo { margin-left: 18px; }
.qa-print { margin-left: 20px; }
.qa-preview { margin-left: 36px; }
.qa-more { margin-left: 31px; }
.quick-access .drop { margin-left: 4px; }
.drop-faint { opacity: .4; }
.qa-more .caret { background: #f4f4f4; }

/* Formula bar */
.formula-bar { display: flex; align-items: stretch; height: 28px; margin: 10px 2px 10px 5px; font-size: 14px; flex: none; font-family: "Noto Sans CJK SC", sans-serif; }
.name-box, .fx-box, .formula { background: #fdfdfd; border: 1px solid #c6c6c6; display: flex; align-items: center; padding-bottom: 2px; }
.name-box { width: 124px; padding: 0 4px 2px 6px; }
.name-box input { flex: 1; }
.dots { display: flex; flex-direction: column; justify-content: center; gap: 3px; width: 30px; align-items: center; }
.dots i { width: 2px; height: 2px; background: #aaa; }
.fx-box { width: 110px; justify-content: space-around; }
.fx-btn { width: 36px; height: 24px; }
.fx { font-family: "Liberation Serif", serif; font-size: 16px; font-weight: 700; color: #666; }
.fx sub { font-size: 11px; vertical-align: baseline; }
.formula { flex: 1; margin-left: 3px; padding: 0 3px 2px 10px; }
.formula input { flex: 1; font-size: 15px; }

/* Worksheet */
.sheet-area { flex: 1; min-height: 0; display: flex; }
.sheet-view { flex: 1; min-width: 0; overflow: hidden; border-right: 1px solid #999; border-bottom: 1px solid #999; background: #fff; }
.sheet { width: 100%; table-layout: fixed; border-spacing: 0; font-family: "Noto Sans CJK SC", sans-serif; color: #000; }
.c-head { width: 26px; }
.c { width: 176px; }
.sheet th, .sheet td { padding: 0; font-weight: 400; text-align: center; }
.sheet th { background: #e6e6e6; font-size: 13px; color: #222; border-right: 1px solid #999; }
.sheet thead th { height: 17px; line-height: 15px; border-bottom: 1px solid #999; }
.sheet tbody th { height: 46px; vertical-align: bottom; line-height: 14px; border-bottom: 1px solid #bbb; }
.sheet td { height: 46px; font-size: 18px; line-height: 26px; border-right: 1px solid #d4d4d4; border-bottom: 1px solid #d4d4d4; }
.sheet .sheet-title { font-size: 19px; }
.sheet .sub { font-size: 17px; }
.corner svg { margin-left: 13px; }
.sheet .col-on { background: #d2d2d2; color: #217346; border-bottom: 2px solid #217346; line-height: 14px; }
.sheet .row-on { background: #d2d2d2; color: #217346; }
.active-cell { position: relative; }
.active-cell::before { content: ""; position: absolute; inset: -2px; border: 2px solid #217346; }
.active-cell::after { content: ""; position: absolute; right: -4px; bottom: -4px; width: 7px; height: 7px; background: #217346; border: 1px solid #fff; }

.vscroll { width: 18px; padding: 2px 0 0 3px; display: flex; flex-direction: column; }
.scroll-btn { height: 15px; background: #fff; border: 1px solid #ababab; flex: none; }
.vtrack { flex: 1; background: #dadada; display: flex; flex-direction: column; }
.vspace { flex: 370; }
.vthumb { flex: 227; background: #fff; border: 1px solid #ababab; }
.vtrack::after { content: ""; flex: 124; }

/* Sheet tabs */
.sheet-tabs { height: 27px; display: flex; font-size: 13px; flex: none; }
.nav-arrow { width: 29px; height: 25px; }
.nav-arrow:first-child { margin-left: 14px; }
.tab-list { display: flex; margin-left: 28px; height: 24px; }
.stab { padding: 0 12px 3px 11px; border-left: 1px solid #999; font-family: "Noto Sans CJK SC", sans-serif; }
.stab-blue, .stab-orange { padding: 1px 2px; color: #000; }
.stab span { display: flex; align-items: center; height: 22px; padding: 0 11px 2px; }
.stab-blue span { background: #bdd7ee; }
.stab-orange span { background: #f4b084; padding: 0 10px 2px; }
.stab-on { background: #fff; color: #217346; border-bottom: 2px solid #217346; border-right: 1px solid #999; margin-top: -1px; padding: 0 13px; }
.add-sheet { width: 17px; height: 25px; margin-left: 32px; }
.dots-tabs { margin-left: auto; height: 25px; width: 32px; }
.hscroll { width: 679px; height: 15px; margin: 6px 17px 0 0; background: #dadada; display: flex; }
.hbtn { width: 17px; background: #fff; border: 1px solid #ababab; flex: none; }
.hthumb { flex: 573; background: #fff; border: 1px solid #ababab; border-left-color: #999; }
.hspace { flex: 72; }

/* Status bar */
.status { height: 22px; border-top: 1px solid #c0c0c0; background: #f1f1f1; display: flex; align-items: center; padding-left: 7px; gap: 18px; flex: none; }
.status-right { display: flex; align-items: center; margin-left: auto; height: 21px; }
.view { width: 38px; height: 21px; }
.view-on { background: #c8c8c8; }
.zoom-btn { width: 10px; height: 21px; }
.view + .zoom-btn { margin-left: 3px; }
.zoom { appearance: none; width: 102px; height: 12px; margin: 0 2px; background: linear-gradient(#999, #999) center / 100% 1px no-repeat; }
.zoom::-webkit-slider-thumb { appearance: none; width: 4px; height: 12px; background: #555; }
.zoom-value { width: 26px; margin: 0 17px 0 14px; }

/* Series dialog */
.dialog { position: absolute; left: 1004px; top: 298px; width: 307px; background: #f0f0f0; border: 1px solid #666; box-shadow: 0 3px 14px rgba(0, 0, 0, .35); color: #000; }
.dialog-title { height: 30px; background: #fff; display: flex; align-items: center; padding: 0 1px 2px 8px; }
.dialog-title h2 { flex: 1; }
.dlg-icon { width: 45px; height: 28px; }
.dlg-help { font-size: 14px; }
.dialog-body { padding: 9px 7px 10px 6px; }
.fieldsets { display: flex; gap: 10px; }
.fs { margin: 0; padding: 7px 8px 5px; border: 1px solid #dcdcdc; height: 129px; min-width: 0; }
.fs legend { margin-left: -4px; line-height: 16px; padding: 0 1px; }
.fs-a { width: 77px; }
.fs-b { width: 102px; }
.fs-c { width: 93px; }
.fs label { display: flex; align-items: center; gap: 4px; height: 25px; white-space: nowrap; }
.fs input, .trend input { appearance: none; flex: none; width: 13px; height: 13px; background: #fff; border: 1px solid #333; }
.fs input { border-radius: 50%; }
.fs input:checked { background: radial-gradient(circle, #333 3px, #fff 4px); }
.trend { display: flex; align-items: center; gap: 4px; margin-top: 16px; height: 15px; }
.values { display: flex; align-items: center; margin-top: 14px; height: 26px; white-space: nowrap; justify-content: space-between; }
.values input { height: 26px; background: #fff; border: 1px solid #ababab; padding: 0 3px 3px; width: 78px; }
.stop-field { position: relative; }
.text-caret { position: absolute; left: 49px; top: 4px; width: 1px; height: 16px; background: #000; }
.dialog-actions { display: flex; justify-content: flex-end; gap: 10px; margin-top: 11px; }
.dlg-btn { width: 74px; height: 29px; background: #e1e1e1; border: 1px solid #adadad; }
.dlg-ok { border: 2px solid #0078d7; }

/* Floating items */
.ime { position: absolute; right: 386px; bottom: 23px; width: 61px; height: 26px; background: #fff; border: 1px solid #777; border-radius: 5px; box-shadow: 0 2px 4px rgba(0, 0, 0, .45); display: flex; align-items: center; justify-content: center; gap: 3px; font-size: 13px; color: #333; }
.watermark { position: absolute; right: 6px; bottom: 8px; display: flex; gap: 1px; opacity: .8; pointer-events: none; }
.watermark-text { display: flex; flex-direction: column; gap: 3px; font-weight: 700; }
.wm-name { font-size: 21px; line-height: 24px; color: #4a8ed0; font-weight: 700; }
.wm-url { font-size: 16px; line-height: 16px; color: #4db870; }
.annotations { position: absolute; left: 0; top: 0; pointer-events: none; filter: drop-shadow(2px 3px 2px rgba(0, 0, 0, .6)); }
.pointer { position: absolute; left: 0; top: 0; }
```
